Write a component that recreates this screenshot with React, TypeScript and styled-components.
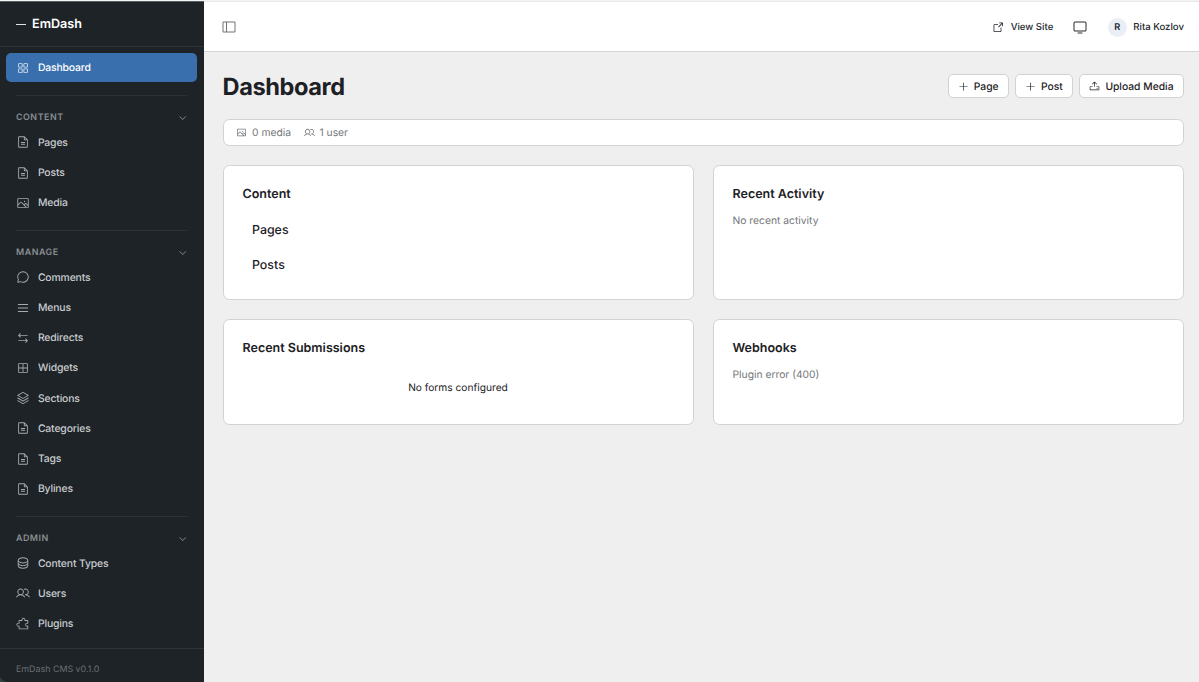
import React from "react";
import styled, { createGlobalStyle, css } from "styled-components";
import type { IconType } from "react-icons";
import {
  PiSquaresFour, PiFileText, PiImage, PiChatCircle, PiList, PiArrowsLeftRight, PiGridFour, PiStack,
  PiDatabase, PiUsers, PiPuzzlePiece, PiCaretDown, PiSidebarSimple, PiArrowSquareOut, PiMonitor,
  PiPlus, PiUpload,
} from "react-icons/pi";

const Global = createGlobalStyle`
  *, *::before, *::after { box-sizing: border-box; }
  body {
    margin: 0;
    overflow: hidden;
    background: #efefef;
    color: #1d2125;
    font-family: Inter, "Liberation Sans", sans-serif;
    font-size: 10.3px;
    text-rendering: geometricPrecision;
    -webkit-font-smoothing: antialiased;
  }
  svg { display: block; flex: none; }
  h1, h2, p { margin: 0; }
`;

const Shell = styled.div`
  display: flex;
  height: 682px;
  border-top: 1px solid #f1f4f3;
`;

const Sidebar = styled.aside`
  display: flex;
  flex-direction: column;
  flex: none;
  width: 203.5px;
  border-top: 1px solid #5a5f62;
  background: radial-gradient(circle at 8px 0, transparent 8px, #2f4540 10px) 0 100% / 6px 9px no-repeat, #1d2327;
  color: #c9cccf;
`;

const Brand = styled.div`
  display: flex;
  align-items: center;
  gap: 6.5px;
  height: 45px;
  padding: 1px 16px 0 16px;
  border-bottom: 1px solid #2d3338;
  color: #fff;
  font-size: 12.6px;
  font-weight: 600;
`;

const Dash = styled.span`
  width: 9.5px;
  height: 1.5px;
  background: #dfe1e2;
`;

const Nav = styled.nav`
  flex: 1;
  padding: 6.4px 7px 0 6.4px;
`;

const NavItem = styled.a<{ $active?: boolean }>`
  display: flex;
  align-items: center;
  gap: 8px;
  height: 28.6px;
  margin-bottom: 1.62px;
  padding: 0.5px 9.5px 0;
  border-radius: 5px;
  font-size: 10.4px;
  font-weight: 500;
  letter-spacing: -0.15px;
  svg { width: 14px; height: 14px; color: #a7abae; }
  ${(p) => p.$active && css`
    background: #3a6fad;
    color: #fff;
    svg { color: #dce8f5; }
  `}
`;

const Group = styled.section`
  margin: 12.8px 0 0;
`;

const GroupHead = styled.div`
  display: flex;
  align-items: center;
  justify-content: space-between;
  height: 33.1px;
  margin: 0 9.5px;
  padding: 12px 0 0;
  border-top: 1px solid #2b3136;
  color: #8a8e92;
  font-size: 8.9px;
  font-weight: 600;
  letter-spacing: 0.55px;
  svg { width: 9.5px; height: 9.5px; }
`;

const SidebarFooter = styled.footer`
  display: flex;
  align-items: center;
  height: 34px;
  padding: 7px 16px 0;
  border-top: 1px solid #2d3338;
  color: #6b6f73;
  font-size: 8.9px;
`;

const Main = styled.main`
  flex: 1;
  min-width: 0;
`;

const TopBar = styled.header`
  display: flex;
  align-items: center;
  height: 51px;
  padding: 1px 15px 0 17.5px;
  background: #fff;
  border-top: 1px solid #e6e7e7;
  border-bottom: 1px solid #d3d3d3;
  color: #24282c;
  font-size: 9.6px;
  font-weight: 500;
`;

const Collapse = styled.button`
  display: flex;
  margin-right: auto;
  padding: 0;
  border: 0;
  background: none;
  color: #6f7377;
`;

const SiteLink = styled.a`
  display: flex;
  align-items: center;
  gap: 6px;
  margin-right: 19px;
`;

const Profile = styled.div`
  display: flex;
  align-items: center;
  gap: 6.5px;
  margin-left: 19.5px;
`;

const Avatar = styled.span`
  display: grid;
  place-items: center;
  width: 19px;
  height: 19px;
  border-radius: 50%;
  background: #eaeff6;
  font-size: 9.2px;
  font-weight: 600;
`;

const Content = styled.div`
  display: flex;
  flex-direction: column;
  padding: 21px 15.5px 0 19px;
`;

const TitleRow = styled.div`
  display: flex;
  align-items: center;
  justify-content: space-between;
  height: 27px;
`;

const Title = styled.h1`
  font-size: 23.6px;
  font-weight: 700;
  letter-spacing: -0.4px;
`;

const Actions = styled.div`
  display: flex;
  gap: 6.5px;
  margin-top: -1px;
`;

const Button = styled.button`
  display: flex;
  align-items: center;
  gap: 5px;
  height: 24px;
  padding: 1px 9px 0;
  border: 1px solid #d2d2d2;
  border-radius: 5px;
  background: #fff;
  color: #1d2125;
  font: 500 10.3px Inter, "Liberation Sans", sans-serif;
  text-rendering: inherit;
  svg { width: 11px; height: 11px; margin-top: -1px; }
`;

const Panel = styled.section`
  border: 1px solid #d2d2d2;
  border-radius: 6.5px;
  background: #fff;
`;

const Stats = styled(Panel)`
  display: flex;
  align-items: center;
  gap: 12.5px;
  height: 27px;
  margin: 19px 0;
  padding: 0.5px 12.5px 0;
  color: #73777b;
`;

const Stat = styled.span`
  display: flex;
  align-items: center;
  gap: 5px;
`;

const Cards = styled.div`
  display: grid;
  grid-template-columns: 1fr 1fr;
  grid-template-rows: 135px 106px;
  gap: 19px;
`;

const Card = styled(Panel)`
  padding: 20px 19px 18px;
`;

const CardTitle = styled.h2`
  font-size: 12.5px;
  font-weight: 600;
  line-height: 17px;
`;

const Collection = styled.a`
  display: block;
  margin: 18px 9.5px -0.5px;
  font-size: 12.4px;
  font-weight: 500;
  line-height: 17.5px;
`;

const Note = styled.p<{ $centered?: boolean }>`
  margin-top: ${(p) => (p.$centered ? "22px" : "9px")};
  color: ${(p) => (p.$centered ? "#1d2125" : "#73777b")};
  font-size: ${(p) => (p.$centered ? "10.2px" : "10.3px")};
  text-align: ${(p) => (p.$centered ? "center" : "left")};
  line-height: 18px;
`;

type Entry = [string, IconType];

const groups: { name: string; items: Entry[] }[] = [
  { name: "CONTENT", items: [["Pages", PiFileText], ["Posts", PiFileText], ["Media", PiImage]] },
  {
    name: "MANAGE",
    items: [
      ["Comments", PiChatCircle], ["Menus", PiList], ["Redirects", PiArrowsLeftRight], ["Widgets", PiGridFour],
      ["Sections", PiStack], ["Categories", PiFileText], ["Tags", PiFileText], ["Bylines", PiFileText],
    ],
  },
  { name: "ADMIN", items: [["Content Types", PiDatabase], ["Users", PiUsers], ["Plugins", PiPuzzlePiece]] },
];

export default function App() {
  return (
    <>
      <Global />
      <Shell>
        <Sidebar>
          <Brand><Dash />EmDash</Brand>
          <Nav>
            <NavItem $active><PiSquaresFour />Dashboard</NavItem>
            {groups.map((g) => (
              <Group key={g.name}>
                <GroupHead>{g.name}<PiCaretDown /></GroupHead>
                {g.items.map(([label, Icon]) => (
                  <NavItem key={label}><Icon />{label}</NavItem>
                ))}
              </Group>
            ))}
          </Nav>
          <SidebarFooter>EmDash CMS v0.1.0</SidebarFooter>
        </Sidebar>
        <Main>
          <TopBar>
            <Collapse aria-label="Toggle sidebar"><PiSidebarSimple size={16} /></Collapse>
            <SiteLink><PiArrowSquareOut size={12.5} />View Site</SiteLink>
            <PiMonitor size={16} />
            <Profile><Avatar>R</Avatar>Rita Kozlov</Profile>
          </TopBar>
          <Content>
            <TitleRow>
              <Title>Dashboard</Title>
              <Actions>
                <Button><PiPlus />Page</Button>
                <Button><PiPlus />Post</Button>
                <Button><PiUpload />Upload Media</Button>
              </Actions>
            </TitleRow>
            <Stats>
              <Stat><PiImage size={11} />0 media</Stat>
              <Stat><PiUsers size={11} />1 user</Stat>
            </Stats>
            <Cards>
              <Card>
                <CardTitle>Content</CardTitle>
                <Collection>Pages</Collection>
                <Collection>Posts</Collection>
              </Card>
              <Card>
                <CardTitle>Recent Activity</CardTitle>
                <Note>No recent activity</Note>
              </Card>
              <Card>
                <CardTitle>Recent Submissions</CardTitle>
                <Note $centered>No forms configured</Note>
              </Card>
              <Card>
                <CardTitle>Webhooks</CardTitle>
                <Note>Plugin error (400)</Note>
              </Card>
            </Cards>
          </Content>
        </Main>
      </Shell>
    </>
  );
}
